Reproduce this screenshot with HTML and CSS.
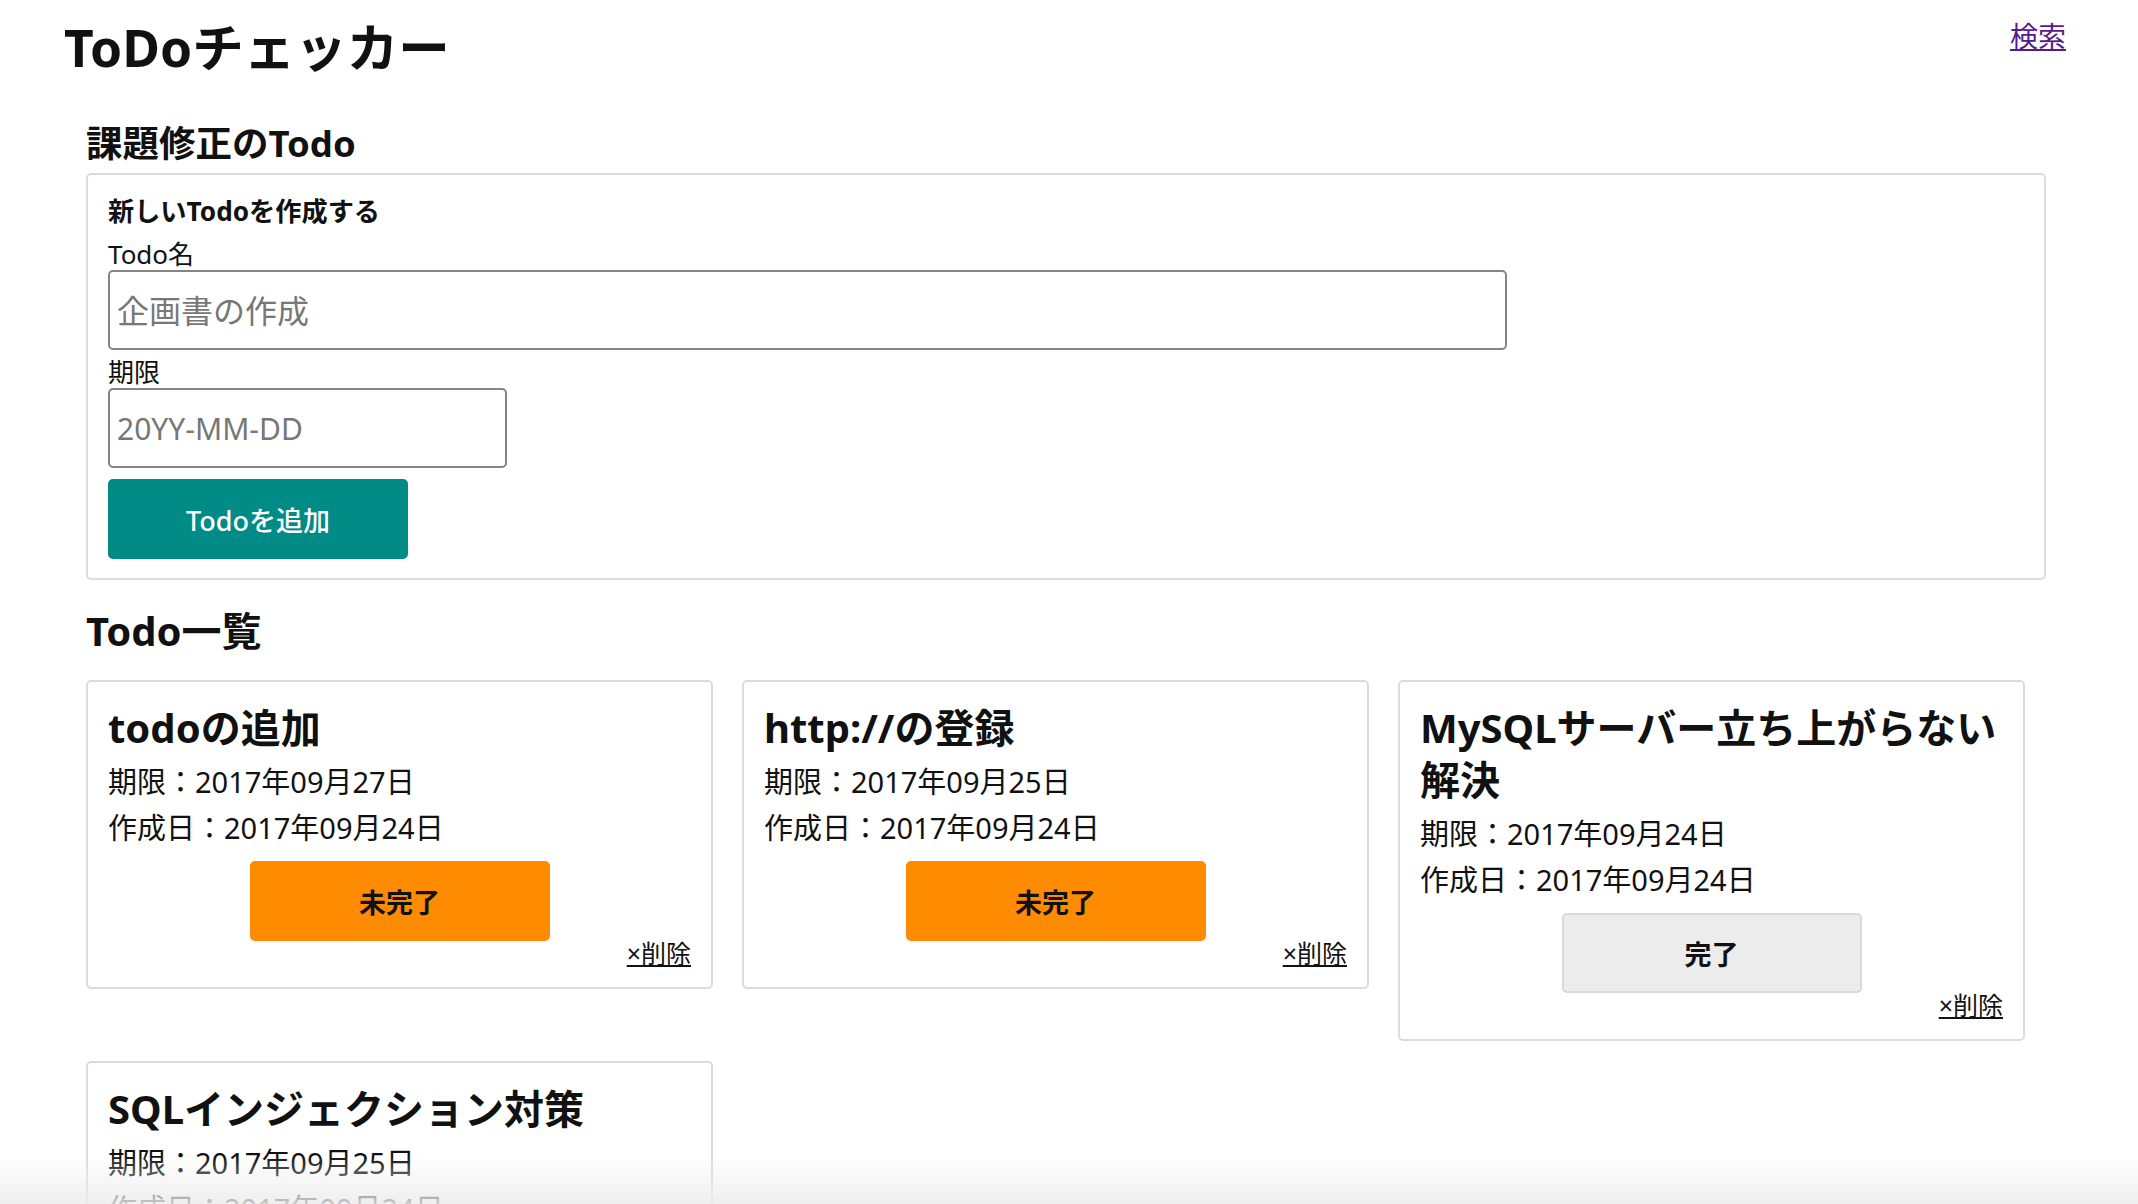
FILE: index.html
```html
<!DOCTYPE html>
<html lang="ja">
<head>
<meta charset="utf-8">
<title>ToDoチェッカー</title>
<link rel="stylesheet" href="styles.css">
</head>
<body>
<header class="top">
  <h1 class="title">ToDoチェッカー</h1>
  <a class="search" href="#">検索</a>
</header>
<main class="main">
  <h2 class="section section-form">課題修正のTodo</h2>
  <form class="form-box">
    <h3 class="form-title">新しいTodoを作成する</h3>
    <label class="label" for="name">Todo名</label>
    <input class="input input-name" id="name" type="text" placeholder="企画書の作成">
    <label class="label" for="limit">期限</label>
    <input class="input input-date" id="limit" type="text" placeholder="20YY-MM-DD">
    <button class="btn-add" type="button">Todoを追加</button>
  </form>

  <h2 class="section section-list">Todo一覧</h2>
  <div class="cards">
    <div class="card">
      <h3 class="card-title">todoの追加</h3>
      <p class="card-line">期限：2017年09月27日</p>
      <p class="card-line">作成日：2017年09月24日</p>
      <button class="btn-status btn-todo" type="button">未完了</button>
      <div class="card-foot"><a class="del" href="#">×削除</a></div>
    </div>
    <div class="card">
      <h3 class="card-title">http://の登録</h3>
      <p class="card-line">期限：2017年09月25日</p>
      <p class="card-line">作成日：2017年09月24日</p>
      <button class="btn-status btn-todo" type="button">未完了</button>
      <div class="card-foot"><a class="del" href="#">×削除</a></div>
    </div>
    <div class="card">
      <h3 class="card-title">MySQLサーバー立ち上がらない解決</h3>
      <p class="card-line">期限：2017年09月24日</p>
      <p class="card-line">作成日：2017年09月24日</p>
      <button class="btn-status btn-done" type="button">完了</button>
      <div class="card-foot"><a class="del" href="#">×削除</a></div>
    </div>
    <div class="card">
      <h3 class="card-title">SQLインジェクション対策</h3>
      <p class="card-line">期限：2017年09月25日</p>
      <p class="card-line">作成日：2017年09月24日</p>
      <button class="btn-status btn-todo" type="button">未完了</button>
      <div class="card-foot"><a class="del" href="#">×削除</a></div>
    </div>
  </div>
</main>
<div class="fade"></div>
</body>
</html>
```

FILE: styles.css
```css
html, body {
  background: #fff;
}
body {
  margin: 0;
  padding: 0 72px 40px 64px;
  font-family: "Noto Sans", "Noto Sans CJK JP", sans-serif;
  color: #111;
}
.top {
  display: flex;
  justify-content: space-between;
  align-items: flex-start;
}
.title {
  margin: 12px 0 0;
  font-size: 51.5px;
  line-height: 70px;
  font-weight: 700;
}
.search {
  margin-top: 16px;
  font-size: 28px;
  line-height: 40px;
  color: #551a8b;
  text-decoration: underline;
}
.main {
  margin-left: 22px;
}
.section {
  font-weight: 700;
  line-height: 44px;
}
.section-form {
  font-size: 36.5px;
  margin: 39px 0 8px;
}
.section-list {
  font-size: 40px;
  margin: 29px 0 27px;
}
.form-box {
  margin: 0 20px 0 0;
  border: 2px solid #dcdcdc;
  border-radius: 5px;
  padding: 19px 20px 19px;
}
.form-title {
  margin: 0 0 10px;
  font-size: 26.2px;
  line-height: 34px;
  font-weight: 700;
}
.label {
  display: block;
  font-size: 26px;
  line-height: 32px;
}
.input {
  display: block;
  box-sizing: border-box;
  height: 80px;
  border: 2px solid #858585;
  border-radius: 5px;
  padding: 0 7px;
  font-family: "Noto Sans", "Noto Sans CJK JP", sans-serif;
  font-size: 32px;
  color: #111;
  background: #fff;
}
.input::placeholder {
  color: #777;
}
.input-name {
  width: 1399px;
  margin-bottom: 6px;
}
.input-date {
  width: 399px;
  margin-bottom: 11px;
  font-size: 30px;
}
.btn-add {
  display: block;
  width: 300px;
  height: 80px;
  border: none;
  border-radius: 5px;
  background: #008b87;
  color: #fff;
  font-family: "Noto Sans", "Noto Sans CJK JP", sans-serif;
  font-size: 27px;
  font-weight: 500;
}
.cards {
  display: grid;
  grid-template-columns: repeat(3, 627px);
  column-gap: 29px;
  row-gap: 20px;
  align-items: start;
}
.card {
  box-sizing: border-box;
  border: 2px solid #dcdcdc;
  border-radius: 5px;
  padding: 20px 20px 22px;
}
.card-title {
  margin: 0 0 5px;
  font-size: 40px;
  line-height: 52px;
  font-weight: 700;
}
.card-line {
  margin: 0;
  font-size: 29px;
  line-height: 46px;
}
.btn-status {
  display: block;
  box-sizing: border-box;
  width: 300px;
  height: 80px;
  margin: 10px auto 0;
  border-radius: 5px;
  font-family: "Noto Sans", "Noto Sans CJK JP", sans-serif;
  font-size: 27px;
  font-weight: 700;
  color: #111;
}
.btn-todo {
  background: #ff8c00;
  border: none;
}
.btn-done {
  background: #ececec;
  border: 2px solid #dadada;
}
.card-foot {
  text-align: right;
  font-size: 25px;
  line-height: 24px;
}
.del {
  color: #111;
  text-decoration: underline;
}
.fade {
  position: fixed;
  left: 0;
  right: 0;
  bottom: 0;
  height: 48px;
  background: linear-gradient(to bottom, rgba(240, 240, 240, 0), rgba(236, 236, 236, 0.85));
  pointer-events: none;
}
```
